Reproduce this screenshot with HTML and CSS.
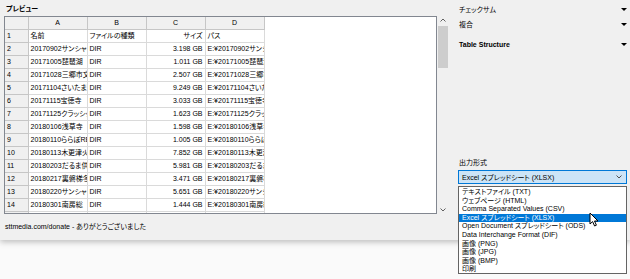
FILE: index.html
```html
<!DOCTYPE html>
<html lang="ja">
<head>
    <meta charset="UTF-8">
    <title>プレビュー</title>
    <link rel="stylesheet" href="styles.css">
</head>
<body>

<div class="window">
    <div class="left">
        <div class="label">プレビュー</div>
        <div class="preview">
            <div class="frame">
                <table class="sheet">
                    <colgroup>
                        <col class="c-row"><col class="c-col"><col class="c-col"><col class="c-col"><col class="c-col">
                    </colgroup>
                    <tr class="head"><th></th><th>A</th><th>B</th><th>C</th><th>D</th></tr>
                    <tr><th>1</th><td>名前</td><td>ファイルの種類</td><td class="num">サイズ</td><td>パス</td></tr>
                    <tr><th>2</th><td>20170902サンシャイ</td><td>DIR</td><td class="num">3.198 GB</td><td>E:¥20170902サンシ</td></tr>
                    <tr><th>3</th><td>20171005琵琶湖</td><td>DIR</td><td class="num">1.011 GB</td><td>E:¥20171005琵琶湖</td></tr>
                    <tr><th>4</th><td>20171028三郷市文</td><td>DIR</td><td class="num">2.507 GB</td><td>E:¥20171028三郷市</td></tr>
                    <tr><th>5</th><td>20171104さいたまク</td><td>DIR</td><td class="num">9.249 GB</td><td>E:¥20171104さいた</td></tr>
                    <tr><th>6</th><td>20171115宝徳寺</td><td>DIR</td><td class="num">3.033 GB</td><td>E:¥20171115宝徳寺</td></tr>
                    <tr><th>7</th><td>20171125クラッシッ</td><td>DIR</td><td class="num">1.623 GB</td><td>E:¥20171125クラッシ</td></tr>
                    <tr><th>8</th><td>20180106浅草寺</td><td>DIR</td><td class="num">1.598 GB</td><td>E:¥20180106浅草寺</td></tr>
                    <tr><th>9</th><td>20180110ららぽREI</td><td>DIR</td><td class="num">1.005 GB</td><td>E:¥20180110ららぽ</td></tr>
                    <tr><th>10</th><td>20180113木更津火</td><td>DIR</td><td class="num">7.852 GB</td><td>E:¥20180113木更津</td></tr>
                    <tr><th>11</th><td>20180203だるま供</td><td>DIR</td><td class="num">5.981 GB</td><td>E:¥20180203だるま</td></tr>
                    <tr><th>12</th><td>20180217裏磐梯冬</td><td>DIR</td><td class="num">3.471 GB</td><td>E:¥20180217裏磐梯</td></tr>
                    <tr><th>13</th><td>20180220サンシャイ</td><td>DIR</td><td class="num">5.651 GB</td><td>E:¥20180220サンシ</td></tr>
                    <tr><th>14</th><td>20180301南房総</td><td>DIR</td><td class="num">1.444 GB</td><td>E:¥20180301南房総</td></tr>
                    <tr><th></th><td></td><td></td><td></td><td></td></tr>
                </table>
            </div>
            <div class="scrollbar">
                <svg class="arrow" width="10" height="8" viewBox="0 0 10 8"><path d="M2.5 5.5 L5 3 L7.5 5.5" fill="none" stroke="#606060" stroke-width="1"/></svg>
                <div class="thumb"></div>
                <div class="track"></div>
                <svg class="arrow" width="10" height="8" viewBox="0 0 10 8"><path d="M2.5 2.5 L5 5 L7.5 2.5" fill="none" stroke="#606060" stroke-width="1"/></svg>
            </div>
        </div>
        <div class="status">sttmedia.com/donate - ありがとうございました</div>
    </div>

    <div class="right">
        <div class="option"><span>チェックサム</span><span class="tri"></span></div>
        <div class="option"><span>複合</span><span class="tri"></span></div>
        <div class="option bold"><span>Table Structure</span><span class="tri"></span></div>
        <div class="spacer"></div>
        <div class="out-label">出力形式</div>
        <div class="select">
            <span>Excel スプレッドシート (XLSX)</span>
            <svg width="8" height="6" viewBox="0 0 8 6"><path d="M1.5 1.5 L4 4 L6.5 1.5" fill="none" stroke="#505050" stroke-width="1"/></svg>
        </div>
    </div>
</div>

<!-- open dropdown list of the select box -->
<div class="dropdown">
    <div class="item">テキストファイル (TXT)</div>
    <div class="item">ウェブページ (HTML)</div>
    <div class="item">Comma Separated Values (CSV)</div>
    <div class="item active">Excel スプレッドシート (XLSX)</div>
    <div class="item">Open Document スプレッドシート (ODS)</div>
    <div class="item">Data Interchange Format (DIF)</div>
    <div class="item">画像 (PNG)</div>
    <div class="item">画像 (JPG)</div>
    <div class="item">画像 (BMP)</div>
    <div class="item">印刷</div>
</div>

<svg class="cursor" width="12" height="16" viewBox="0 0 12 16">
    <path d="M1 1 L1 12 L3.6 9.6 L5.6 14 L7.4 13.2 L5.5 9 L9 9 Z" fill="#ffffff" stroke="#000000" stroke-width="1" stroke-linejoin="round"/>
</svg>

</body>
</html>
```

FILE: styles.css
```css
body {
    margin: 0;
    width: 630px;
    height: 279px;
    overflow: hidden;
    background-color: #fafafa;
    font-family: "Liberation Sans", "Noto Sans CJK JP", sans-serif;
    font-feature-settings: "palt";
    font-size: 7px;
    color: #000000;
    position: relative;
}
.window {
    height: 240px;
    background-color: #f0f0f0;
    display: flex;
    box-shadow: 0 2px 6px rgba(0, 0, 0, 0.25);
}
.left {
    width: 444px;
    flex-shrink: 0;
    padding: 4px 0 0 4px;
    display: flex;
    flex-direction: column;
}
.label {
    font-weight: bold;
    height: 12px;
    line-height: 10px;
    padding-left: 2px;
}
.preview {
    display: flex;
    height: 198px;
}
.frame {
    width: 432px;
    height: 196px;
    border: 1px solid #828790;
    background-color: #ffffff;
    overflow: hidden;
}
.sheet {
    border-collapse: collapse;
    table-layout: fixed;
    width: 258px;
}
.sheet .c-row { width: 23px; }
.sheet .c-col { width: 59px; }
.sheet th,
.sheet td {
    height: 12px;
    padding: 0 2px;
    line-height: 12px;
    border: 1px solid #dadada;
    white-space: nowrap;
    overflow: hidden;
    font-weight: normal;
    text-align: left;
}
.sheet th {
    background-color: #f0f0f0;
    border-color: #c6c6c6;
}
.sheet tr:first-child th,
.sheet tr:first-child td {
    border-top: none;
}
.sheet tr > :first-child {
    border-left: none;
}
.sheet .head th {
    text-align: center;
}
.sheet .num {
    text-align: right;
}
.scrollbar {
    width: 10px;
    margin-left: 1px;
    display: flex;
    flex-direction: column;
}
.scrollbar .arrow {
    display: block;
    height: 8px;
}
.scrollbar .thumb {
    height: 42px;
    margin-top: 2px;
    background-color: #cdcdcd;
}
.scrollbar .track {
    flex: 1;
}
.status {
    margin-top: 7px;
    padding-left: 1px;
}
.right {
    flex: 1;
    min-width: 0;
    padding: 4px 3px 0 11px;
    display: flex;
    flex-direction: column;
}
.option {
    display: flex;
    justify-content: space-between;
    align-items: center;
    height: 10px;
    margin-bottom: 5px;
}
.option.bold {
    font-weight: bold;
    margin-top: 5px;
}
.tri {
    width: 0;
    height: 0;
    border-left: 3px solid transparent;
    border-right: 3px solid transparent;
    border-top: 3px solid #000000;
    margin-right: 0;
}
.spacer {
    height: 104px;
}
.out-label {
    height: 12px;
    line-height: 10px;
}
.select {
    height: 12px;
    border: 1px solid #0078d7;
    background-color: #cce4f7;
    display: flex;
    justify-content: space-between;
    align-items: center;
    padding: 0 3px 0 3px;
    margin-left: -1px;
}
.dropdown {
    position: absolute;
    left: 458px;
    top: 186px;
    width: 169px;
    height: 88px;
    border: 1px solid #646464;
    background-color: #ffffff;
    padding-top: 1px;
    box-sizing: border-box;
}
.dropdown .item {
    height: 8.6px;
    line-height: 8.6px;
    padding-left: 3px;
    white-space: nowrap;
}
.dropdown .item.active {
    background-color: #0078d7;
    color: #ffffff;
}
.cursor {
    position: absolute;
    left: 589px;
    top: 212px;
}
```
